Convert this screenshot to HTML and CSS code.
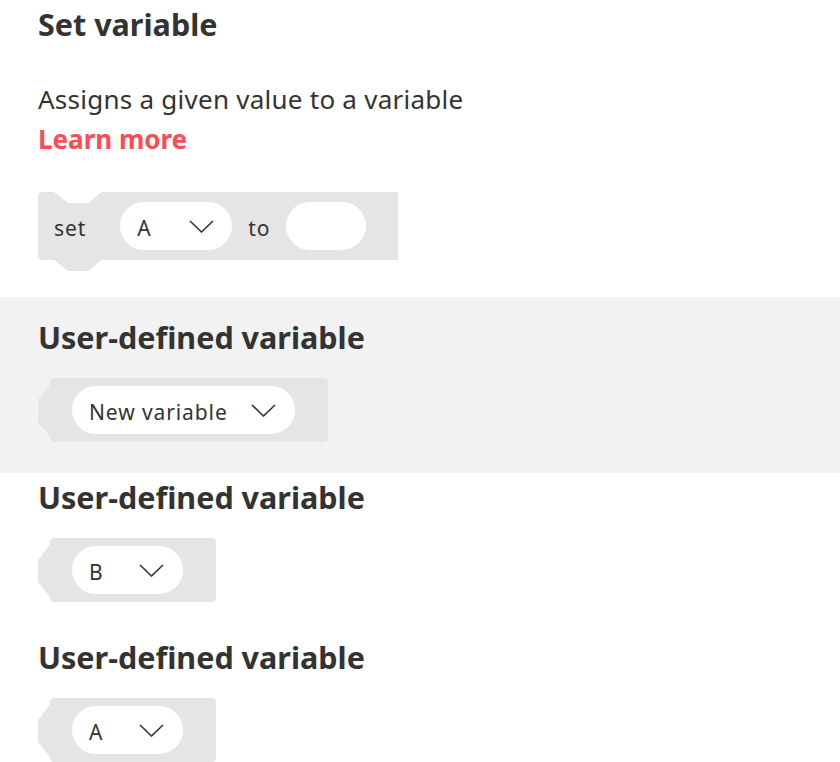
FILE: index.html
```html
<!DOCTYPE html>
<html>
<head>
<meta charset="utf-8">
<link rel="stylesheet" href="styles.css">
</head>
<body>
<div class="page">
  <section class="intro">
    <h2 class="title">Set variable</h2>
    <p class="desc">Assigns a given value to a variable</p>
    <a class="learn" href="#">Learn more</a>
    <div class="stmt-block">
      <span class="label label-set">set</span>
      <span class="pill dropdown"><span class="pill-text">A</span><svg class="chev" width="25" height="13" viewBox="0 0 25 13"><path d="M1 1 L12.5 12 L24 1" fill="none" stroke="#333" stroke-width="1.6"/></svg></span>
      <span class="label">to</span>
      <span class="pill empty"></span>
    </div>
  </section>

  <section class="item active">
    <h2 class="title">User-defined variable</h2>
    <div class="value-block">
      <span class="pill dropdown"><span class="pill-text">New variable</span><svg class="chev" width="25" height="13" viewBox="0 0 25 13"><path d="M1 1 L12.5 12 L24 1" fill="none" stroke="#333" stroke-width="1.6"/></svg></span>
    </div>
  </section>

  <section class="item">
    <h2 class="title">User-defined variable</h2>
    <div class="value-block">
      <span class="pill dropdown"><span class="pill-text">B</span><svg class="chev" width="25" height="13" viewBox="0 0 25 13"><path d="M1 1 L12.5 12 L24 1" fill="none" stroke="#333" stroke-width="1.6"/></svg></span>
    </div>
  </section>

  <section class="item">
    <h2 class="title">User-defined variable</h2>
    <div class="value-block">
      <span class="pill dropdown"><span class="pill-text">A</span><svg class="chev" width="25" height="13" viewBox="0 0 25 13"><path d="M1 1 L12.5 12 L24 1" fill="none" stroke="#333" stroke-width="1.6"/></svg></span>
    </div>
  </section>
</div>
</body>
</html>
```

FILE: styles.css
```css
html, body {
  margin: 0;
  padding: 0;
  background: #ffffff;
}

body {
  font-family: "Noto Sans", "Liberation Sans", sans-serif;
  color: #333333;
  overflow: hidden;
}

.page {
  width: 840px;
}

.intro {
  padding: 0 38px 37px;
  display: flex;
  flex-direction: column;
  align-items: flex-start;
}

.title {
  margin: 0;
  font-size: 30.5px;
  line-height: 48px;
  font-weight: 700;
  color: #333333;
}

.desc {
  margin: 31px 0 0;
  font-size: 26px;
  line-height: 40px;
  font-weight: 400;
  letter-spacing: 0.25px;
}

.learn {
  font-size: 26px;
  line-height: 40px;
  font-weight: 700;
  color: #fa4d56;
  text-decoration: none;
}

.stmt-block {
  position: relative;
  margin-top: 33px;
  width: 360px;
  height: 68px;
  box-sizing: border-box;
  background: #e5e5e5;
  border-radius: 4px 0 0 4px;
  display: flex;
  align-items: center;
  gap: 16px;
  padding: 0 32px 0 16px;
}

.stmt-block::before {
  content: "";
  position: absolute;
  left: 16px;
  top: 0;
  width: 47px;
  height: 11px;
  background: #ffffff;
  clip-path: polygon(0 0, 100% 0, 74% 100%, 30% 100%);
}

.stmt-block::after {
  content: "";
  position: absolute;
  left: 16px;
  top: 100%;
  width: 47px;
  height: 11px;
  background: #e5e5e5;
  clip-path: polygon(0 0, 100% 0, 74% 100%, 30% 100%);
}

.label {
  font-size: 21px;
  line-height: 24px;
  padding-top: 4px;
  letter-spacing: 0.9px;
}

.label-set {
  margin-right: 18px;
}

.pill {
  height: 48px;
  border-radius: 24px;
  background: #ffffff;
  box-sizing: border-box;
  display: flex;
  align-items: center;
}

.dropdown {
  min-width: 112px;
  justify-content: space-between;
  gap: 23px;
  padding: 0 18px 0 17px;
}

.pill-text {
  font-size: 21px;
  line-height: 24px;
  padding-top: 3px;
  letter-spacing: 0.9px;
}

.chev {
  display: block;
  flex: none;
}

.empty {
  width: 80px;
}

.item {
  padding: 0 38px 31px;
}

.item.active {
  background: #f2f2f2;
  padding-top: 16px;
}

.item .title {
  margin-bottom: 17px;
}

.value-block {
  position: relative;
  margin-left: 12px;
  display: inline-flex;
  align-items: center;
  height: 64px;
  box-sizing: border-box;
  padding: 0 33px 0 22px;
  background: #e5e5e5;
  border-radius: 4px;
  vertical-align: top;
}

.value-block::before {
  content: "";
  position: absolute;
  left: -12px;
  top: 5px;
  width: 13px;
  height: 55px;
  background: #e5e5e5;
  clip-path: polygon(100% 0, 0 31%, 0 71%, 100% 100%);
}

.value-block .dropdown {
  padding-right: 19px;
  min-width: 111px;
}
```
